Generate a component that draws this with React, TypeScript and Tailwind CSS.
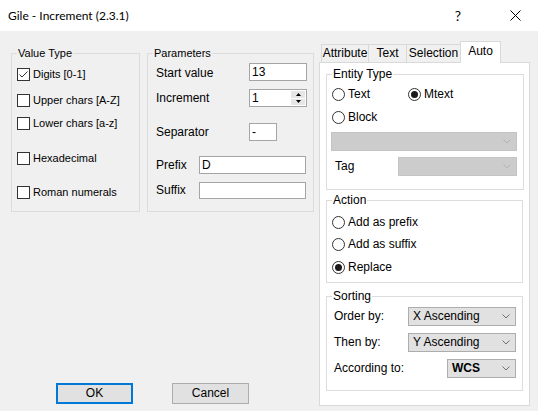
import type { ReactNode } from "react";

function Group({
  title,
  className = "",
  children,
}: {
  title: string;
  className?: string;
  children: ReactNode;
}) {
  return (
    <fieldset className={`border border-[#dcdcdc] ${className}`}>
      <legend className="ml-[5px] px-[1px] leading-[13px]">{title}</legend>
      {children}
    </fieldset>
  );
}

function CheckBox({ checked = false }: { checked?: boolean }) {
  return (
    <span className="flex h-[13px] w-[13px] shrink-0 items-center justify-center border border-[#333] bg-white">
      {checked && (
        <svg width="11" height="11" viewBox="0 0 11 11">
          <path d="M1.5 5.5 L4 8 L9.5 2.5" fill="none" stroke="#333" strokeWidth="1" />
        </svg>
      )}
    </span>
  );
}

function Radio({ checked = false }: { checked?: boolean }) {
  return (
    <span className="flex h-[13px] w-[13px] shrink-0 items-center justify-center rounded-full border border-[#333] bg-white">
      {checked && <span className="h-[7px] w-[7px] rounded-full bg-[#1a1a1a]" />}
    </span>
  );
}

function CheckRow({ label, checked, className = "" }: { label: string; checked?: boolean; className?: string }) {
  return (
    <div className={`flex h-[13px] items-center gap-[3px] ${className}`}>
      <CheckBox checked={checked} />
      <span>{label}</span>
    </div>
  );
}

function RadioRow({ label, checked, className = "" }: { label: string; checked?: boolean; className?: string }) {
  return (
    <div className={`flex h-[13px] items-center gap-[3px] ${className}`}>
      <Radio checked={checked} />
      <span>{label}</span>
    </div>
  );
}

function TextBox({ value = "", className = "" }: { value?: string; className?: string }) {
  return (
    <div className={`flex items-center border border-[#a5a5a5] bg-white pl-[2px] text-[12px] ${className}`}>
      {value}
    </div>
  );
}

function Chevron({ color }: { color: string }) {
  return (
    <svg width="8" height="5" viewBox="0 0 8 5" className="ml-auto mr-[5px] shrink-0">
      <polyline points="0.5,0.5 4,4 7.5,0.5" fill="none" stroke={color} strokeWidth="1" />
    </svg>
  );
}

function Combo({ value = "", disabled = false, className = "" }: { value?: string; disabled?: boolean; className?: string }) {
  return (
    <div
      className={`flex h-[19px] items-center pl-[4px] text-[12px] ${
        disabled ? "border border-[#c4c4c4] bg-[#cccccc]" : "border border-[#adadad] bg-[#e1e1e1]"
      } ${className}`}
    >
      <span>{value}</span>
      <Chevron color={disabled ? "#b3b3b3" : "#707070"} />
    </div>
  );
}

function Tab({ label, active = false, className = "" }: { label: string; active?: boolean; className?: string }) {
  return (
    <div
      className={`flex items-center justify-center border border-[#d9d9d9] ${
        active ? "relative z-10 -mb-px h-[22px] border-b-0 bg-white pb-[3px]" : "h-[18px] border-b-0 bg-[#f0f0f0]"
      } ${className}`}
    >
      {label}
    </div>
  );
}

export default function App() {
  return (
    <div className="flex h-[411px] w-[538px] flex-col overflow-hidden bg-[#f0f0f0] font-['Liberation_Sans',Arial,sans-serif] text-[11px] leading-[13px] text-black">
      {/* window caption */}
      <div className="flex h-[31px] shrink-0 items-center bg-white pl-[8px]">
        <span className="font-['Lato',sans-serif] text-[12px]">Gile - Increment (2.3.1)</span>
        <span className="ml-auto font-['Lato',sans-serif] text-[14px]">?</span>
        <svg width="11" height="11" viewBox="0 0 11 11" className="ml-[49px] mr-[17px]">
          <path d="M0.5 0.5 L10.5 10.5 M10.5 0.5 L0.5 10.5" stroke="#000" strokeWidth="1" />
        </svg>
      </div>

      <div className="flex flex-1">
        {/* left side: options + buttons */}
        <div className="flex w-[319px] flex-col pl-[11px] pt-[16px]">
          <div className="flex gap-[7px]">
            <Group title="Value Type" className="h-[165px] w-[129px]">
              <div className="flex flex-col pl-[5px]">
                <CheckRow label="Digits [0-1]" checked className="mt-[8px]" />
                <CheckRow label="Upper chars [A-Z]" className="mt-[13px]" />
                <CheckRow label="Lower chars [a-z]" className="mt-[10px]" />
                <CheckRow label="Hexadecimal" className="mt-[22px]" />
                <CheckRow label="Roman numerals" className="mt-[21px]" />
              </div>
            </Group>

            <Group title="Parameters" className="h-[165px] w-[167px]">
              <div className="flex flex-col pl-[8px]">
                <div className="mt-[3px] flex h-[18px] items-center">
                  <span className="w-[93px] pt-[3px] text-[12px]">Start value</span>
                  <TextBox value="13" className="h-[18px] w-[58px]" />
                </div>
                <div className="mt-[8px] flex h-[18px] items-center">
                  <span className="w-[93px] text-[12px]">Increment</span>
                  <div className="flex h-[18px] w-[58px] border border-[#a5a5a5] bg-white">
                    <span className="flex items-center pl-[2px] text-[12px]">1</span>
                    <div className="my-[1px] ml-auto mr-[1px] flex w-[14px] flex-col gap-px">
                      <div className="flex flex-1 items-center justify-center bg-[#e6e6e6]">
                        <svg width="5" height="3" viewBox="0 0 5 3">
                          <polygon points="0,3 2.5,0 5,3" fill="#000" />
                        </svg>
                      </div>
                      <div className="flex flex-1 items-center justify-center bg-[#e6e6e6]">
                        <svg width="5" height="3" viewBox="0 0 5 3">
                          <polygon points="0,0 2.5,3 5,0" fill="#000" />
                        </svg>
                      </div>
                    </div>
                  </div>
                </div>
                <div className="mt-[16px] flex h-[18px] items-center">
                  <span className="w-[93px] text-[12px]">Separator</span>
                  <TextBox value="-" className="h-[18px] w-[28px]" />
                </div>
                <div className="mt-[15px] flex h-[18px] items-center">
                  <span className="w-[43px] text-[12px]">Prefix</span>
                  <TextBox value="D" className="h-[18px] w-[107px]" />
                </div>
                <div className="mt-[8px] flex h-[17px] items-center">
                  <span className="w-[43px] text-[12px]">Suffix</span>
                  <TextBox className="h-[17px] w-[107px]" />
                </div>
              </div>
            </Group>
          </div>

          <div className="mt-[171px] flex text-[12px]">
            <button className="ml-[45px] h-[21px] w-[77px] border-2 border-[#0078d7] bg-[#e1e1e1]">OK</button>
            <button className="ml-[39px] h-[21px] w-[77px] border border-[#adadad] bg-[#e1e1e1]">Cancel</button>
          </div>
        </div>

        {/* right side: tab control */}
        <div className="flex w-[211px] flex-col pt-[11px]">
          <div className="flex h-[20px] items-end pl-[2px] text-[12px]">
            <Tab label="Attribute" className="w-[48px]" />
            <Tab label="Text" className="-ml-px w-[39px]" />
            <Tab label="Selection" className="-ml-px w-[55px]" />
            <Tab label="Auto" active className="-ml-px w-[41px]" />
          </div>

          <div className="flex h-[344px] flex-col border border-[#d9d9d9] bg-white px-[6px] text-[12px]">
            <Group title="Entity Type" className="mt-[5px] h-[122px]">
              <div className="flex flex-col pl-[5px] pr-[6px]">
                <div className="mt-[7px] flex">
                  <RadioRow label="Text" className="w-[76px]" />
                  <RadioRow label="Mtext" checked />
                </div>
                <RadioRow label="Block" className="mt-[10px]" />
                <Combo disabled className="-ml-px mt-[8px] w-[186px]" />
                <div className="mt-[6px] flex items-center">
                  <span className="ml-[3px] w-[63px]">Tag</span>
                  <Combo disabled className="flex-1" />
                </div>
              </div>
            </Group>

            <Group title="Action" className="mt-[4px] h-[89px]">
              <div className="flex flex-col pl-[5px]">
                <RadioRow label="Add as prefix" className="mt-[9px]" />
                <RadioRow label="Add as suffix" className="mt-[9px]" />
                <RadioRow label="Replace" checked className="mt-[10px]" />
              </div>
            </Group>

            <Group title="Sorting" className="mt-[7px] h-[101px]">
              <div className="flex flex-col pl-[7px] pr-[6px]">
                <div className="mt-[4px] flex items-center">
                  <span className="w-[74px]">Order by:</span>
                  <Combo value="X Ascending" className="flex-1" />
                </div>
                <div className="mt-[7px] flex items-center">
                  <span className="w-[74px]">Then by:</span>
                  <Combo value="Y Ascending" className="flex-1" />
                </div>
                <div className="mt-[7px] flex items-center">
                  <span className="w-[113px]">According to:</span>
                  <Combo value="WCS" className="flex-1 font-bold" />
                </div>
              </div>
            </Group>
          </div>
        </div>
      </div>
    </div>
  );
}
